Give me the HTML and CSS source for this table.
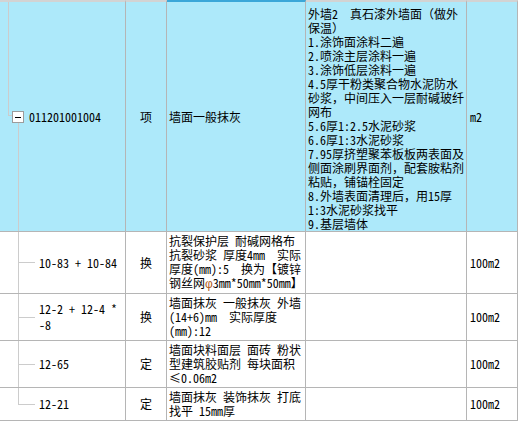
FILE: index.html
```html
<!DOCTYPE html>
<html lang="zh">
<head>
<meta charset="utf-8">
<title>清单</title>
<link rel="stylesheet" href="styles.css">
</head>
<body>
<table class="grid">
  <colgroup>
    <col class="c-code"><col class="c-type"><col class="c-name"><col class="c-desc"><col class="c-unit">
  </colgroup>
  <tr class="row-main">
    <td class="code root"><div class="root-inner"><span class="toggle"></span><span>011201001004</span></div></td>
    <td class="type">项</td>
    <td class="name name-active">墙面一般抹灰</td>
    <td class="desc">外墙2&nbsp;&nbsp;真石漆外墙面（做外<br>保温）<br>1.涂饰面涂料二遍<br>2.喷涂主层涂料一遍<br>3.涂饰低层涂料一遍<br>4.5厚干粉类聚合物水泥防水<br>砂浆，中间压入一层耐碱玻纤<br>网布<br>5.6厚1:2.5水泥砂浆<br>6.6厚1:3水泥砂浆<br>7.95厚挤塑聚苯板板两表面及<br>侧面涂刷界面剂，配套胺粘剂<br>粘贴，铺锚栓固定<br>8.外墙表面清理后，用15厚<br>1:3水泥砂浆找平<br>9.基层墙体</td>
    <td class="unit">m2</td>
  </tr>
  <tr class="row-sub r2">
    <td class="code child">10-83 + 10-84</td>
    <td class="type">换</td>
    <td class="name">抗裂保护层 耐碱网格布<br>抗裂砂浆 厚度4mm&nbsp;&nbsp;实际<br>厚度(mm):5&nbsp;&nbsp;换为【镀锌<br>钢丝网<span class="phi">φ</span>3mm*50mm*50mm】</td>
    <td class="desc"></td>
    <td class="unit">100m2</td>
  </tr>
  <tr class="row-sub r3">
    <td class="code child">12-2 + 12-4 *<br>-8</td>
    <td class="type">换</td>
    <td class="name">墙面抹灰 一般抹灰 外墙<br>(14+6)mm&nbsp;&nbsp;实际厚度<br>(mm):12</td>
    <td class="desc"></td>
    <td class="unit">100m2</td>
  </tr>
  <tr class="row-sub r4">
    <td class="code child">12-65</td>
    <td class="type">定</td>
    <td class="name">墙面块料面层 面砖 粉状<br>型建筑胶贴剂 每块面积<br>≤0.06m2</td>
    <td class="desc"></td>
    <td class="unit">100m2</td>
  </tr>
  <tr class="row-sub r5">
    <td class="code child last">12-21</td>
    <td class="type">定</td>
    <td class="name">墙面抹灰 装饰抹灰 打底<br>找平 15mm厚</td>
    <td class="desc"></td>
    <td class="unit">100m2</td>
  </tr>
</table>
</body>
</html>
```
FILE: styles.css
```css
html, body {
  margin: 0;
  padding: 0;
  background: #ffffff;
}
body {
  font-family: "Noto Sans Mono CJK SC", "Noto Sans CJK SC", sans-serif;
  font-size: 12px;
  color: #000000;
}
.grid {
  border-collapse: separate;
  border-spacing: 0;
  table-layout: fixed;
  width: 518px;
}
.c-code { width: 126px; }
.c-type { width: 41px; }
.c-name { width: 139px; }
.c-desc { width: 161px; }
.c-unit { width: 51px; }

.grid td {
  box-sizing: border-box;
  padding: 0 2px;
  border-right: 1px solid #b5b5b5;
  border-bottom: 1px solid #b5b5b5;
  vertical-align: middle;
  line-height: 14px;
  white-space: nowrap;
  overflow: hidden;
  background-color: #ffffff;
}
.row-main td {
  background-color: #ade9fa;
  border-top: 2px solid #d3d3d3;
  height: 232px;
}
.row-main td.name-active {
  border-top-color: #3ba7d8;
}
.r2 td { height: 62px; }
.r3 td { height: 47px; }
.r4 td { height: 47px; }
.r5 td { height: 33px; }

.type {
  text-align: center;
}
.grid td.type { padding: 0; }
.grid td.unit { padding-left: 3px; }
.grid td.desc {
  vertical-align: top;
  padding-top: 5px;
}

/* tree column */
.grid td.root {
  padding: 0 0 0 12px;
  background-image:
    linear-gradient(#cccccc, #cccccc),
    linear-gradient(#cccccc, #cccccc),
    linear-gradient(#cccccc, #cccccc);
  background-repeat: no-repeat;
  background-position: 8px 0, 8px 113px, 18px 121px;
  background-size: 1px 114px, 4px 1px, 1px 200px;
}
.root-inner {
  display: flex;
  align-items: center;
  height: 16px;
}
.toggle {
  position: relative;
  display: inline-block;
  box-sizing: border-box;
  width: 12px;
  height: 12px;
  border: 1px solid #9c9c9c;
  background: #ffffff;
  margin-right: 5px;
  flex: none;
}
.toggle::after {
  content: "";
  position: absolute;
  left: 2px;
  right: 2px;
  top: 5px;
  height: 1px;
  background: #000000;
}
.grid td.child {
  padding-left: 39px;
  line-height: 16px;
  background-image:
    linear-gradient(#cccccc, #cccccc),
    linear-gradient(#cccccc, #cccccc);
  background-repeat: no-repeat;
  background-position: 18px 0, 19px 50%;
  background-size: 1px 100%, 16px 1px;
}
.grid td.child.last {
  background-position: 18px 0, 19px 16px;
  background-size: 1px 17px, 16px 1px;
}
.phi {
  font-family: "Liberation Sans", sans-serif;
  color: #b05a1a;
}
```
